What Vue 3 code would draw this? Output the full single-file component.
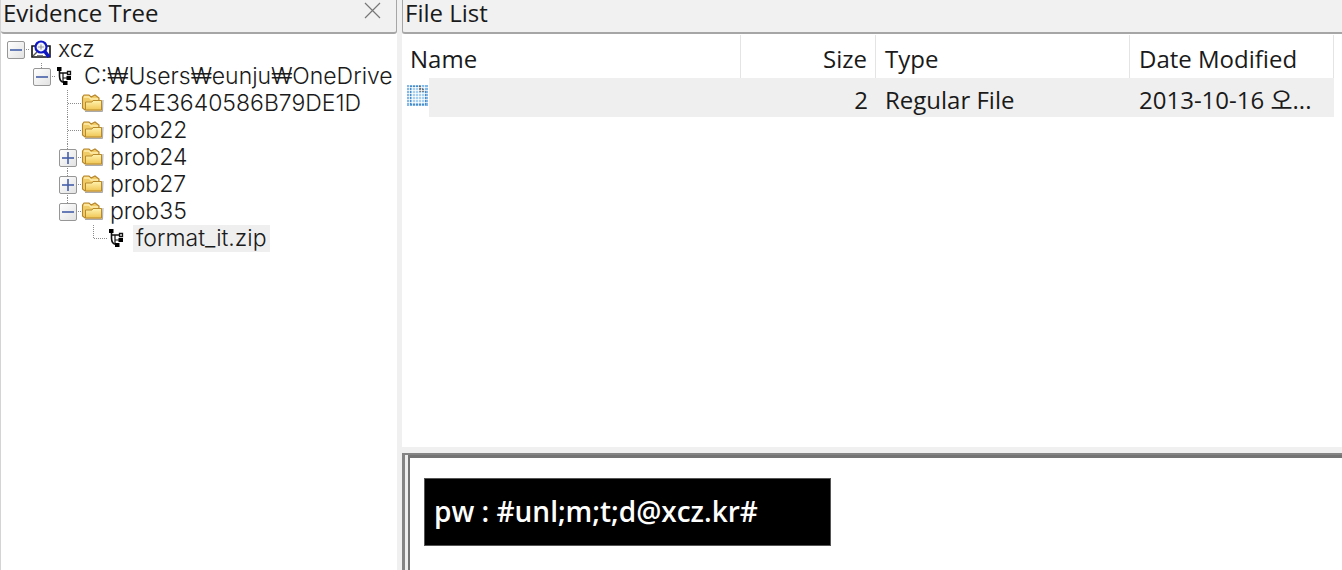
<script setup>
const tree = [
  { label: 'xcz', icon: 'case', cells: [{ box: 'minus' }] },
  { label: 'C:₩Users₩eunju₩OneDrive', icon: 'node', cells: [{}, { box: 'minus', up: true }] },
  { label: '254E3640586B79DE1D', icon: 'folder', cells: [{}, {}, { up: true, down: true, across: true }] },
  { label: 'prob22', icon: 'folder', cells: [{}, {}, { up: true, down: true, across: true }] },
  { label: 'prob24', icon: 'folder', cells: [{}, {}, { box: 'plus', up: true, down: true }] },
  { label: 'prob27', icon: 'folder', cells: [{}, {}, { box: 'plus', up: true, down: true }] },
  { label: 'prob35', icon: 'folder', cells: [{}, {}, { box: 'minus', up: true }] },
  { label: 'format_it.zip', icon: 'node', selected: true, cells: [{}, {}, {}, { up: true, across: true }] },
]
const files = [{ name: '', size: 2, type: 'Regular File', date: '2013-10-16 오...' }]
</script>

<template>
  <main class="app">
    <section class="side">
      <header class="bar">
        <h2>Evidence Tree</h2>
        <button class="close" aria-label="Close">
          <svg width="18" height="18" viewBox="0 0 18 18"><path d="M1 2L16 17M16 2L1 17" stroke="#777" stroke-width="1.2" /></svg>
        </button>
      </header>
      <ul class="tree">
        <li v-for="node in tree" :key="node.label" class="node">
          <span v-for="(cell, i) in node.cells" :key="i" class="cell">
            <svg width="26" height="27" viewBox="0 0 26 27" fill="none" stroke="#8c8c8c" stroke-dasharray="1 1">
              <path v-if="cell.up" d="M12.5 0V13" />
              <path v-if="cell.down" d="M12.5 14V27" />
              <path v-if="cell.box || cell.across" d="M13 13.5H26" />
            </svg>
            <button v-if="cell.box" class="toggle" :aria-label="(cell.box === 'plus' ? 'Expand ' : 'Collapse ') + node.label">
              <svg width="16" height="16" viewBox="0 0 16 16" stroke="#4560a8" stroke-width="1.6">
                <path d="M2 8H14" />
                <path v-if="cell.box === 'plus'" d="M8 2V14" />
              </svg>
            </button>
          </span>
          <span class="icon">
            <svg v-if="node.icon === 'case'" width="24" height="20" viewBox="-1 -1 24 20" fill="none">
              <path d="M2 6H20V17H2Z" fill="#fff" stroke="#111" stroke-width="1.600" />
              <path d="M3 16L7 12M7 16H13" stroke="#555" stroke-width="1.400" />
              <circle cx="11" cy="7" r="5.500" fill="#f4f6ff" stroke="#1018c4" stroke-width="2.200" />
              <path d="M8 7H14M11 4.500V9.500" stroke="#9a9a9a" stroke-width="1.200" />
              <path d="M14.500 11L19 17" stroke="#1018c4" stroke-width="3.600" />
            </svg>
            <svg v-else-if="node.icon === 'node'" width="24" height="20" viewBox="-1 0 24 20" fill="none">
              <path d="M3.500 3V10Q3.500 16 8 16.500M4 7H11" stroke="#111" stroke-width="1.600" />
              <path d="M7 7V16M7 12H12" stroke="#111" stroke-width="1.200" />
              <path d="M1 1H5.500V5H1ZM10.500 10H15V14H10.500ZM7 15H11.500V19H7Z" fill="#000" />
              <path d="M11.500 5.500H14.500V8.500H11.500Z" fill="#fff" stroke="#111" stroke-width="1.300" />
            </svg>
            <svg v-else width="24" height="20" viewBox="0 0 24 20">
              <defs>
                <linearGradient id="fold" x1="0" y1="0" x2="0" y2="1">
                  <stop offset="0" stop-color="#fff3b0" />
                  <stop offset="1" stop-color="#f0c552" />
                </linearGradient>
              </defs>
              <path d="M4 18.500H21.500L22 7" fill="none" stroke="#aaa" stroke-width="1" />
              <path d="M1.500 4L3 2H8L10 4L14 2L18 5V8H20.500V17H4L1.500 15Z" fill="#f0cc68" stroke="#b5852c" stroke-width="1.100" />
              <path d="M3 4H8L10 6H17" fill="none" stroke="#ffeeb0" stroke-width="1.300" />
              <path d="M4.500 9H11L12 7.500H20.500V17H4.500Z" fill="url(#fold)" stroke="#b98a2c" stroke-width="1" />
            </svg>
          </span>
          <span class="label" :class="{ selected: node.selected }">{{ node.label }}</span>
        </li>
      </ul>
    </section>

    <section class="content">
      <header class="bar"><h2>File List</h2></header>
      <div class="list">
        <table>
          <colgroup>
            <col /><col class="c-size" /><col class="c-type" /><col class="c-date" />
          </colgroup>
          <thead>
            <tr><th>Name</th><th class="num">Size</th><th>Type</th><th>Date Modified</th></tr>
          </thead>
          <tbody>
            <tr v-for="file in files" :key="file.date">
              <td class="name">
                <span class="file">
                  <svg width="21" height="21" viewBox="0 0 21 21" fill="none">
                    <path d="M0 0H21V21H0Z" fill="#83b9e8" />
                    <path d="M3 1H15L18 4V20H3Z" fill="#a9cff0" />
                    <path d="M3.500 1V20M18.500 5V20M3 19.500H19M3 1.500H14" stroke="#4a8cc8" stroke-width="1.400" />
                    <path d="M12 1L18 6.500M13 2V6H18" stroke="#666" stroke-width="1.400" />
                    <path d="M0 2.500H21M0 5.500H21M0 8.500H21M0 11.500H21M0 14.500H21M0 17.500H21M2.500 0V21M5.500 0V21M8.500 0V21M11.500 0V21M14.500 0V21M17.500 0V21" stroke="#fff" stroke-opacity=".75" />
                  </svg>
                </span>{{ file.name }}
              </td>
              <td class="num">{{ file.size }}</td>
              <td>{{ file.type }}</td>
              <td>{{ file.date }}</td>
            </tr>
          </tbody>
        </table>
      </div>
      <div class="viewer">
        <div class="page"><p class="note">pw : #unl;m;t;d@xcz.kr#</p></div>
      </div>
    </section>
  </main>
</template>

<style>
body { margin: 0; background: #f0f0f0; }
</style>

<style scoped>
* { box-sizing: border-box; }
.app {
  display: flex;
  gap: 5px;
  min-height: 100vh;
  background: #f0f0f0;
  color: #1a1a1a;
  font: 24px/32px "Open Sans", "Noto Sans CJK KR", sans-serif;
}
.side {
  flex: 0 0 397px;
  min-width: 0;
  background: #fff;
  border-left: 1px solid #d4d4d4;
  overflow: hidden;
}
.content { flex: 1; min-width: 0; display: flex; flex-direction: column; }
.bar {
  display: flex;
  justify-content: space-between;
  height: 34px;
  padding: 0 14px 0 2px;
  background: #f1f1f1;
  border: solid #a6a6a6;
  border-width: 0 1px 2px 0;
  border-radius: 0 0 3px 3px;
}
.content .bar { border-left-width: 1px; border-right: 0; border-radius: 0 0 0 3px; }
h2 { margin: 0; font: inherit; line-height: 26px; }
.close { width: 18px; height: 20px; padding: 1px 0; border: 0; background: none; line-height: 0; }
.tree { list-style: none; margin: 0; padding: 2px 0 0 2px; font: 23px/27px Inter, "Noto Sans CJK KR", sans-serif; font-weight: 300; }
.node { display: flex; height: 27px; white-space: nowrap; }
.cell { display: grid; flex: 0 0 26px; }
.cell > * { grid-area: 1 / 1; }
.toggle {
  width: 18px;
  height: 18px;
  margin: 5px 0 0 4px;
  padding: 0;
  border: 1px solid #969696;
  border-radius: 2px;
  background: linear-gradient(135deg, #fff, #e2e2e2);
  line-height: 0;
}
.icon { flex: 0 0 26px; display: flex; align-items: center; padding: 0 0 2px; }
.label { padding: 0 3px; }
.selected { background: #efefef; }
.list { flex: 1; min-height: 413px; padding: 1px 8px 0 0; background: #fff; }
table { width: 100%; table-layout: fixed; border-collapse: separate; border-spacing: 0; }
.c-size { width: 135px; }
.c-type { width: 254px; }
.c-date { width: 204px; }
th { height: 43px; padding: 5px 9px 0 8px; font-weight: 400; text-align: left; border-right: 1px solid #e4e4e4; }
td { height: 39px; padding: 5px 9px 0; background: #efefef; white-space: nowrap; }
th + th { padding-left: 9px; }
th.num, td.num { text-align: right; padding-right: 8px; }
td.name { padding: 0; }
.file { display: flex; width: 27px; height: 39px; padding: 7px 0 0 5px; background: #fff; }
.viewer {
  flex: 0 0 auto;
  margin-top: 6px;
  border: solid #848484;
  border-width: 2px 0 0 3px;
  background: #eee;
}
.page {
  min-height: 115px;
  margin-left: 3px;
  padding: 20px 14px 23px;
  border: solid #747474;
  border-width: 3px 0 0 2px;
  background: #fff;
}
.note {
  width: 407px;
  max-width: 100%;
  margin: 0;
  padding: 16px 9px 18px;
  background: #000;
  border: 1px solid #555;
  color: #fff;
  font-size: 28px;
  font-weight: 600;
}
</style>
